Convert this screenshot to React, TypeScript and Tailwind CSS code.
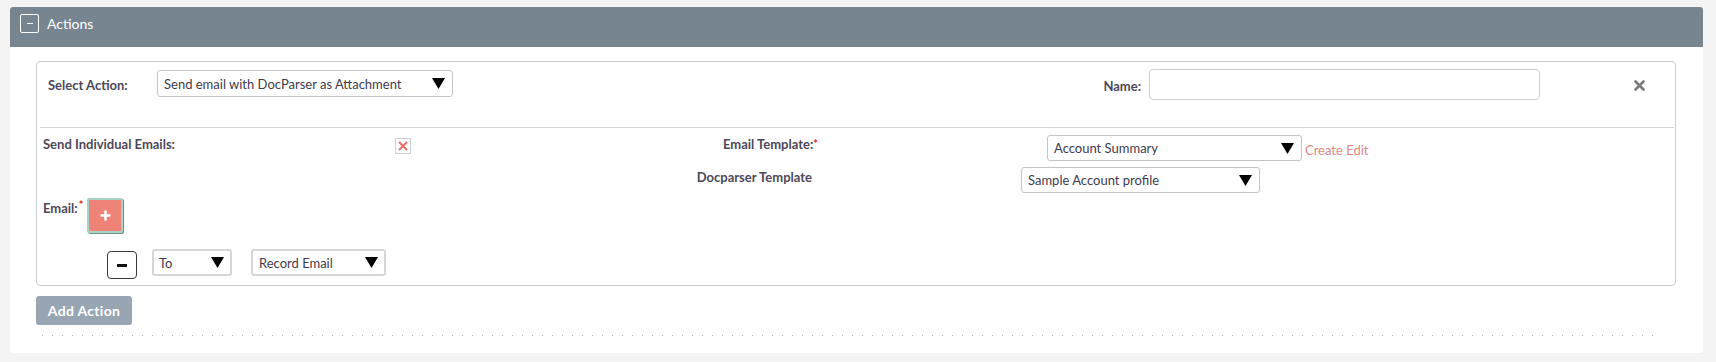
import React from "react";

const Arrow = () => (
  <svg width="13" height="11" viewBox="0 0 13 11" className="shrink-0">
    <polygon points="0,0 13,0 6.5,11" fill="#000" />
  </svg>
);

function Select({
  text,
  className,
  pad = "pl-[6px] pr-[7px]",
  border = "border border-[#c5c5c5]",
}: {
  text: string;
  className: string;
  pad?: string;
  border?: string;
}) {
  return (
    <div
      className={`flex items-center justify-between rounded-[3px] bg-white ${border} ${pad} ${className}`}
    >
      <span className="text-[13px] leading-[16px] text-[#3f3b4d] whitespace-nowrap">{text}</span>
      <Arrow />
    </div>
  );
}

export default function App() {
  return (
    <div
      className="w-full h-[362px] bg-[#f4f4f4] pt-[7px] pl-[10px] pr-[13px]"
      style={{ fontFamily: "Lato, 'Open Sans', sans-serif" }}
    >
      <div className="h-[346px] bg-white rounded-[3px] overflow-hidden">
        {/* header */}
        <div className="h-[40px] bg-[#778591] flex items-start pt-[7px] pl-[10px]">
          <div className="w-[19px] h-[19px] border border-white rounded-[2px] flex items-center justify-center">
            <div className="w-[6px] h-px bg-white" />
          </div>
          <span className="ml-[8px] mt-[1px] text-[14px] leading-[18px] text-white">Actions</span>
        </div>

        {/* body */}
        <div className="pt-[14px] pl-[26px] pr-[27px]">
          <div className="h-[225px] border border-[#c9cdd1] rounded-[4px]">
            {/* row 1 */}
            <div className="h-[65px] flex items-start pt-[7px] pl-[11px] pr-[30px]">
              <span className="w-[109px] mt-[8px] text-[13px] leading-[16px] font-bold text-[#4d4859]">
                Select Action:
              </span>
              <Select
                text="Send email with DocParser as Attachment"
                className="w-[296px] h-[27px] mt-px"
                pad="pl-[6px] pr-[7px]"
              />
              <div className="flex-1 flex justify-end">
                <span className="mt-[9px] text-[13px] leading-[16px] font-bold text-[#4d4859]">Name:</span>
              </div>
              <div className="ml-[8px] w-[391px] h-[31px] border border-[#cfcfcf] rounded-[4px] bg-white" />
              <svg width="11" height="11" viewBox="0 0 11 11" className="ml-[94px] mt-[11px]">
                <path d="M1.5 1.5 L9.5 9.5 M9.5 1.5 L1.5 9.5" stroke="#7a7a7a" strokeWidth="2.6" strokeLinecap="round" />
              </svg>
            </div>
            <div className="ml-[3px] mr-px h-px bg-[#d4d4d4]" />

            {/* row A */}
            <div className="flex items-start pt-[7px] pl-[6px]">
              <span className="w-[352px] mt-px text-[13px] leading-[16px] font-bold text-[#4d4859] whitespace-nowrap">
                Send Individual Emails:
              </span>
              <div className="mt-[3px] w-[16px] h-[16px] border border-[#cfcfcf] flex items-center justify-center">
                <svg width="10" height="10" viewBox="0 0 10 10">
                  <path d="M1 1 L9 9 M9 1 L1 9" stroke="#e8706a" strokeWidth="2" />
                </svg>
              </div>
              <div className="w-[407px] mt-px text-right text-[13px] leading-[16px] font-bold text-[#4d4859] whitespace-nowrap">
                Email Template:<span className="text-[#e0251b] text-[11px] align-top">*</span>
              </div>
              <Select text="Account Summary" className="ml-[229px] w-[255px] h-[26px]" />
              <span className="ml-[3px] mt-[7px] text-[13px] leading-[16px] text-[#e2877d] whitespace-nowrap">
                Create Edit
              </span>
            </div>

            {/* row B */}
            <div className="flex items-start mt-[6px]">
              <div className="w-[775px] mt-[2px] text-right text-[13px] leading-[16px] font-bold text-[#4d4859] whitespace-nowrap">
                Docparser Template
              </div>
              <Select text="Sample Account profile" className="ml-[209px] w-[239px] h-[26px]" />
            </div>

            {/* row C */}
            <div className="flex items-start mt-[5px] pl-[6px]">
              <span className="mt-[2px] text-[13px] leading-[16px] font-bold text-[#4d4859]">Email:</span>
              <span className="ml-px mt-[1px] text-[11px] leading-[12px] font-bold text-[#e0251b]">*</span>
              <button className="ml-[4px] w-[36px] h-[35px] bg-[#f08377] border-2 border-[#a6d3c5] rounded-[2px] shadow-[1px_1px_0_#6e9488] flex items-center justify-center">
                <svg width="11" height="11" viewBox="0 0 11 11">
                  <path d="M5.5 0.5 V10.5 M0.5 5.5 H10.5" stroke="#fff" strokeWidth="2.6" />
                </svg>
              </button>
            </div>

            {/* row D */}
            <div className="flex items-start mt-[16px] pl-[70px]">
              <button className="mt-[2px] w-[30px] h-[28px] bg-white border border-[#3a3a3a] rounded-[4px] flex items-center justify-center">
                <div className="w-[10px] h-[3px] bg-[#111]" />
              </button>
              <Select
                text="To"
                className="ml-[15px] w-[80px] h-[27px]"
                border="border-2 border-[#d6d6d6]"
                pad="pl-[5px] pr-[6px]"
              />
              <Select
                text="Record Email"
                className="ml-[19px] w-[135px] h-[27px]"
                border="border-2 border-[#d6d6d6]"
                pad="pl-[6px] pr-[6px]"
              />
            </div>
          </div>

          <button className="mt-[10px] w-[96px] h-[29px] bg-[#98a6b3] rounded-[3px] text-white text-[14px] font-bold tracking-[0.3px]">
            Add Action
          </button>

          <div className="mt-[10px] ml-[6px] mr-[14px] h-px bg-[linear-gradient(to_right,#b5b5b5_1px,transparent_1px)] bg-[length:10px_1px]" />
        </div>
      </div>
    </div>
  );
}
